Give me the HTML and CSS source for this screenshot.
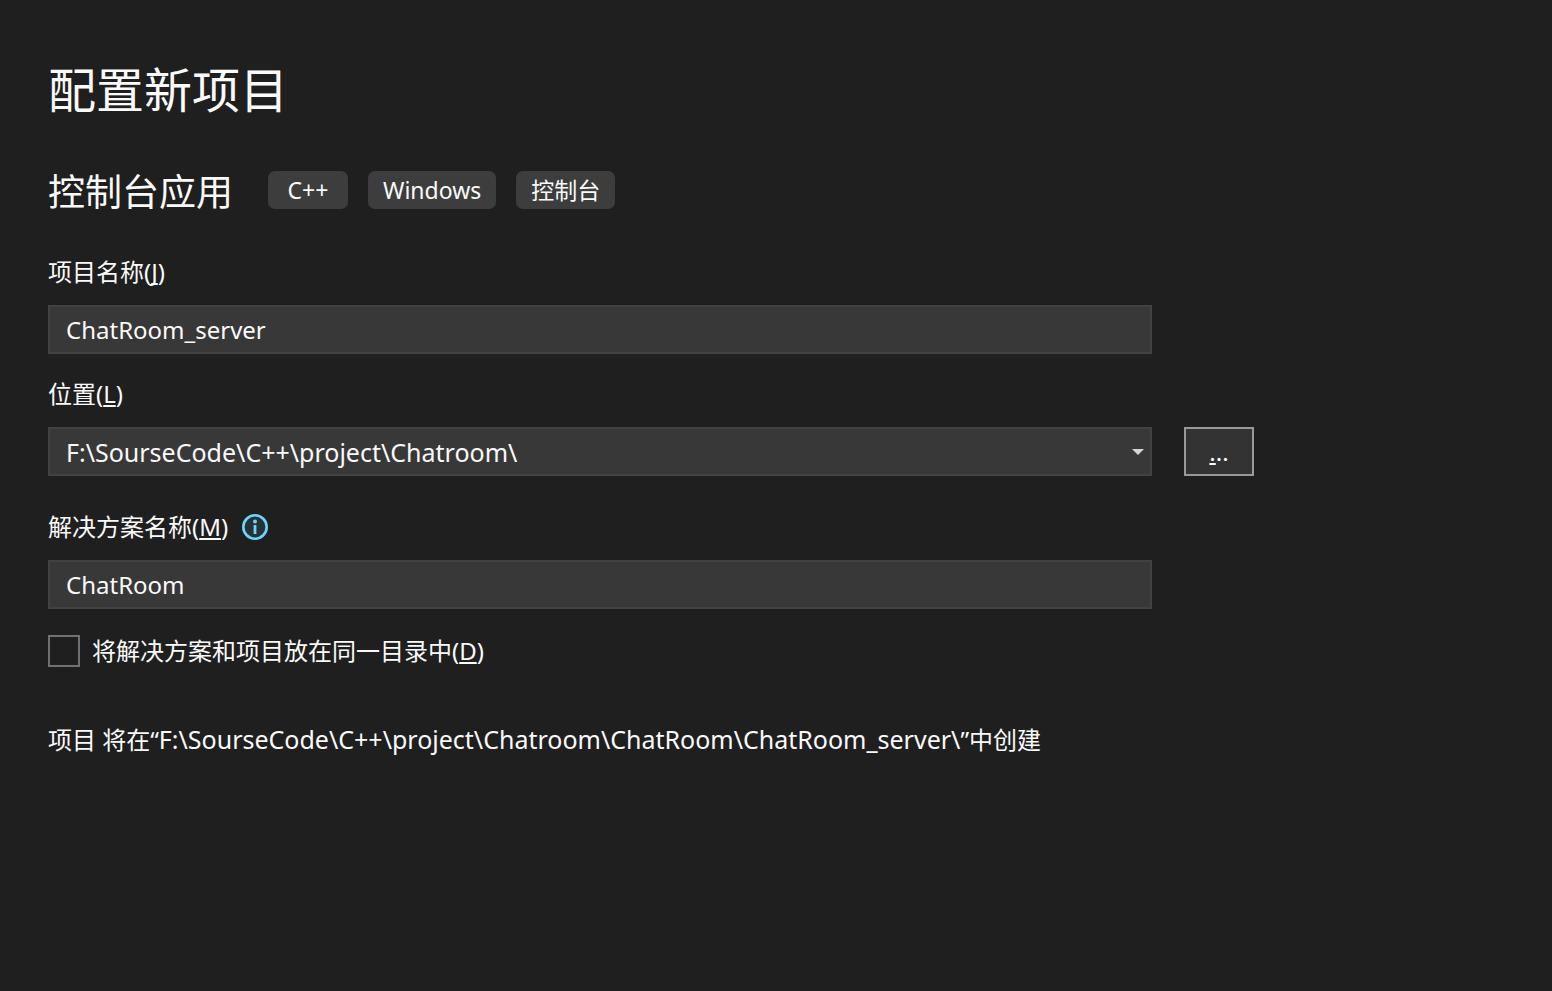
FILE: index.html
```html
<!DOCTYPE html>
<html lang="zh-CN">
<head>
    <meta charset="UTF-8">
    <meta name="viewport" content="width=device-width, initial-scale=1.0">
    <title>配置新项目</title>
    <link rel="stylesheet" href="styles.css">
</head>
<body>
    <main class="page">
        <h1>配置新项目</h1>

        <div class="template">
            <h2>控制台应用</h2>
            <ul class="tags">
                <li class="tag">C++</li>
                <li class="tag">Windows</li>
                <li class="tag">控制台</li>
            </ul>
        </div>

        <form class="config-form">
            <div class="form-group">
                <label for="project_name">项目名称(<u>J</u>)</label>
                <input type="text" class="field" id="project_name" name="project_name" value="ChatRoom_server">
            </div>

            <div class="form-group">
                <label for="location">位置(<u>L</u>)</label>
                <div class="select-wrap">
                    <select class="field path" id="location" name="location">
                        <option>F:\SourseCode\C++\project\Chatroom\</option>
                    </select>
                    <svg class="arrow" width="12" height="6" viewBox="0 0 12 6"><path d="M0 0h12L6 6z" fill="#d6d6d6"/></svg>
                </div>
                <button type="button" class="browse"><u>.</u>..</button>
            </div>

            <div class="form-group solution">
                <div class="label-row">
                    <label for="solution_name">解决方案名称(<u>M</u>)</label>
                    <svg class="info" width="26" height="26" viewBox="0 0 26 26">
                        <circle cx="13" cy="13" r="11.7" fill="#263238" stroke="#6cd5fa" stroke-width="2.6"/>
                        <circle cx="13" cy="7.6" r="2" fill="#6cd5fa"/>
                        <path d="M13 11v9" stroke="#6cd5fa" stroke-width="2.8"/>
                    </svg>
                </div>
                <input type="text" class="field" id="solution_name" name="solution_name" value="ChatRoom">
            </div>

            <div class="check-row">
                <input type="checkbox" class="check" id="same_dir" name="same_dir">
                <label for="same_dir">将解决方案和项目放在同一目录中(<u>D</u>)</label>
            </div>
        </form>

        <p class="summary">项目 将在“<span class="path">F:\SourseCode\C++\project\Chatroom\ChatRoom\ChatRoom_server\</span>”中创建</p>
    </main>
</body>
</html>
```
FILE: styles.css
```css
* {
    box-sizing: border-box;
}
body {
    margin: 0;
    background-color: #1f1f1f;
    color: #fafafa;
    font-family: "Noto Sans", "Noto Sans CJK SC", sans-serif;
    font-size: 24px;
    line-height: 32px;
}
.page {
    padding: 58px 48px;
}
h1, h2 {
    margin: 0;
    font-weight: normal;
}
h1 {
    font-size: 48px;
    line-height: 64px;
}
h2 {
    font-size: 37px;
    line-height: 48px;
}
.template {
    display: flex;
    flex-wrap: wrap;
    align-items: flex-start;
    gap: 35px;
    margin-top: 46px;
}
.tags {
    display: flex;
    gap: 20px;
    margin: 0;
    padding: 3px 0 0;
    list-style: none;
}
.tag {
    min-width: 80px;
    padding: 3px 15px;
    border-radius: 7px;
    background-color: #3d3d3d;
    font-size: 23px;
    text-align: center;
}
.config-form {
    max-width: 1206px;
    margin-top: 40px;
}
.form-group {
    display: grid;
    grid-template-columns: minmax(0, 1fr) 70px;
    column-gap: 32px;
    row-gap: 17px;
    margin-bottom: 24px;
}
.form-group > label,
.label-row {
    grid-column: 1 / -1;
}
.label-row {
    display: flex;
    align-items: center;
    gap: 14px;
}
.solution {
    margin-top: 35px;
    margin-bottom: 26px;
}
u {
    text-underline-offset: 2px;
    text-decoration-thickness: 2px;
    text-decoration-skip-ink: none;
}
.field {
    width: 100%;
    height: 49px;
    padding: 0 16px;
    border: 2px solid #424242;
    border-radius: 0;
    outline: none;
    background-color: #383838;
    color: #fafafa;
    font: inherit;
    appearance: none;
}
.path {
    font-size: 25px;
}
.select-wrap {
    position: relative;
}
.select-wrap .field {
    display: block;
}
.arrow {
    position: absolute;
    top: 22px;
    right: 8px;
    pointer-events: none;
}
.browse {
    padding: 0;
    border: 2px solid #999;
    background-color: #333;
    color: #fafafa;
    font: inherit;
}
.check-row {
    display: flex;
    align-items: center;
    gap: 12px;
}
.check {
    width: 32px;
    height: 32px;
    margin: 0;
    border: 2px solid #717171;
    background-color: #1f1f1f;
    appearance: none;
}
.check:checked {
    background-color: #6cd5fa;
}
.summary {
    margin: 56px 0 0;
}
```
